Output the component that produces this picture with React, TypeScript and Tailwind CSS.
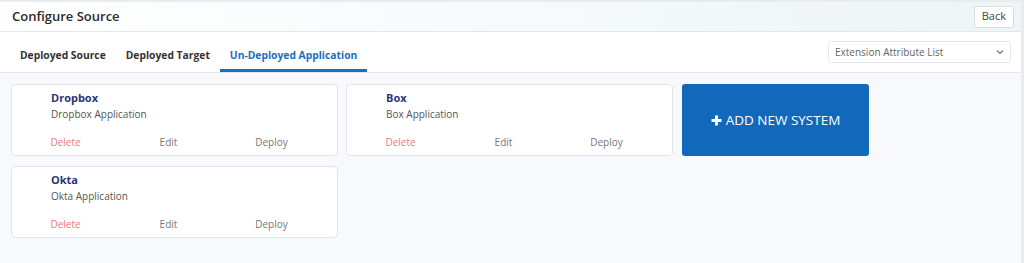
import React from "react";

const font = { fontFamily: '"Open Sans", "Noto Sans", sans-serif' };

function Card({ title, sub }: { title: string; sub: string }) {
  return (
    <div className="w-[327px] h-[72px] bg-white border border-[#e3e5ea] rounded-[4px] flex flex-col">
      <div className="pl-[39px] pt-[6px] text-[11px] font-bold text-[#2b3577] leading-[14px]">{title}</div>
      <div className="pl-[39px] pt-[2px] text-[10px] text-[#555] leading-[14px]">{sub}</div>
      <div className="grid grid-cols-3 w-[309px] ml-[2px] mt-[14px] text-[10px] leading-[14px] text-center">
        <span className="text-[#e57a7a]">Delete</span>
        <span className="text-[#777]">Edit</span>
        <span className="text-[#777]">Deploy</span>
      </div>
    </div>
  );
}

export default function App() {
  return (
    <div className="w-[1024px] h-[263px] bg-[#e9ecef] pt-[2px] pr-[3px] overflow-hidden" style={font}>
      <div className="h-full flex flex-col bg-[#f8f9fc]">
        <div className="h-[30px] flex items-center justify-between pl-[12px] pr-[7px] bg-gradient-to-r from-white to-[#edf5f7] border-b border-[#e3e6ea]">
          <span className="text-[13px] font-semibold text-[#2c2c2c]">Configure Source</span>
          <button className="h-[22px] px-[7px] bg-white border border-[#d9dde3] rounded-[3px] text-[11px] text-[#444]">Back</button>
        </div>
        <div className="h-[41px] bg-white flex items-end justify-between pl-[10px] pr-[10px] border-b border-[#e6e8ec]">
          <div className="flex text-[10.3px] font-bold">
            <div className="px-[10px] h-[31px] flex items-start pt-[7px] text-[#333]">Deployed Source</div>
            <div className="px-[10px] h-[31px] flex items-start pt-[7px] text-[#333]">Deployed Target</div>
            <div className="px-[10px] h-[31px] flex items-start pt-[7px] text-[#1a6fc1] border-b-[3px] border-[#1a6fc1]">Un-Deployed Application</div>
          </div>
          <div className="self-start mt-[9px] w-[183px] h-[22px] border border-[#e5e7eb] rounded-[3px] flex items-center justify-between px-[6px] text-[10px] text-[#666]">
            <span>Extension Attribute List</span>
            <svg width="8" height="6" viewBox="0 0 8 6"><path d="M1 1.5 L4 4.5 L7 1.5" fill="none" stroke="#777" strokeWidth="1.2" /></svg>
          </div>
        </div>
        <div className="pl-[11px] pt-[11px] flex flex-col gap-[10px]">
          <div className="flex gap-[8px]">
            <Card title="Dropbox" sub="Dropbox Application" />
            <Card title="Box" sub="Box Application" />
            <button className="ml-[1px] w-[187px] h-[72px] bg-[#1269bb] rounded-[3px] text-white text-[13.5px] flex items-center justify-center gap-[4px]">
              <svg width="11" height="11" viewBox="0 0 11 11"><path d="M5.5 0.5 V10.5 M0.5 5.5 H10.5" stroke="white" strokeWidth="3" /></svg>
              <span>ADD NEW SYSTEM</span>
            </button>
          </div>
          <div className="flex">
            <Card title="Okta" sub="Okta Application" />
          </div>
        </div>
      </div>
    </div>
  );
}
